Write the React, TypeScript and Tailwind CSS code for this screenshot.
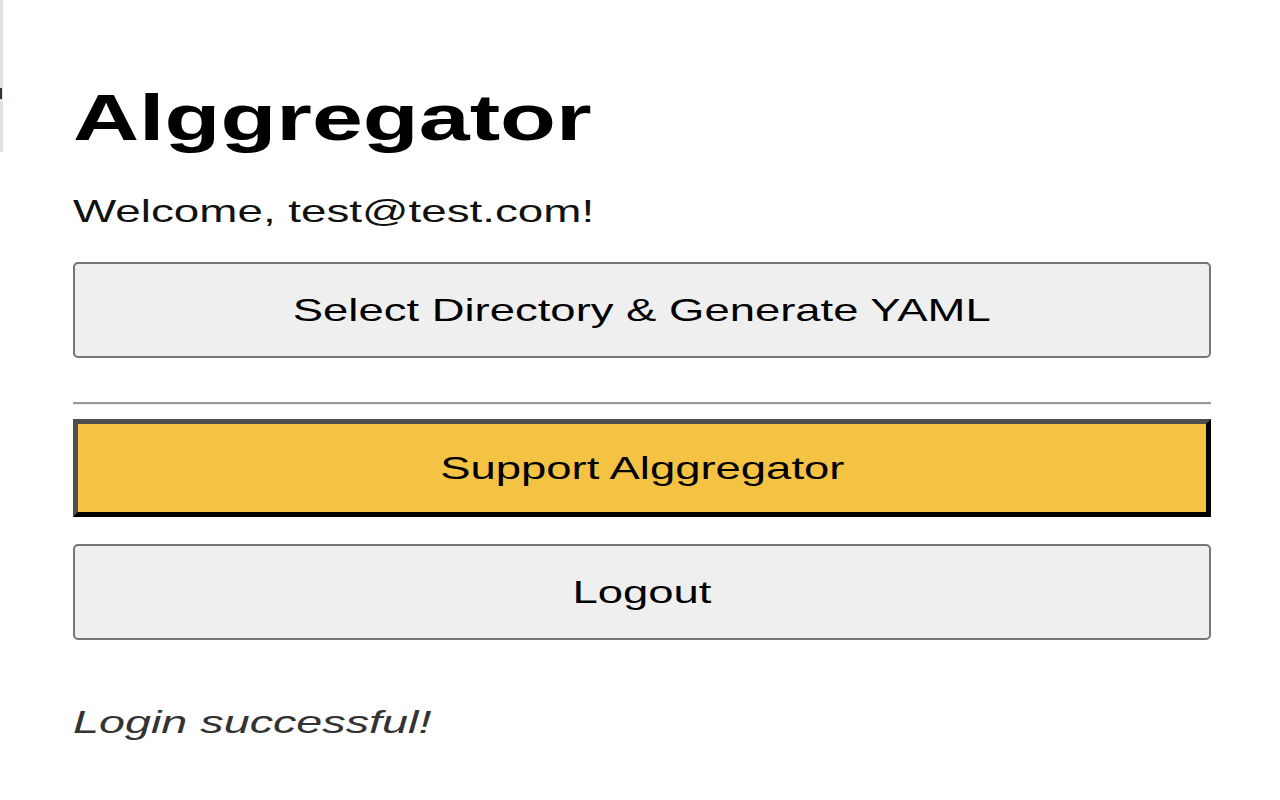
import React from "react";

function PopupButton({
  label,
  variant = "plain",
}: {
  label: string;
  variant?: "plain" | "support";
}) {
  const base =
    "w-full flex items-center justify-center text-[32px] leading-none text-black";
  const styles =
    variant === "support"
      ? "h-[98px] bg-[#f5c343] border-[5px] border-t-[#4e4e4e] border-l-[#4e4e4e] border-b-black border-r-black"
      : "h-[96px] bg-[#efefef] border-2 border-[#767676] rounded-[5px]";
  return (
    <button className={`${base} ${styles}`}>
      <span className="inline-block scale-x-[1.42] whitespace-nowrap">
        {label}
      </span>
    </button>
  );
}

function App() {
  const email = "test@test.com";
  return (
    <div
      className="relative w-[1280px] h-[800px] bg-white overflow-hidden"
      style={{ fontFamily: '"Liberation Sans", Arial, sans-serif' }}
    >
      {/* leftover window edge on the left */}
      <div className="absolute left-0 top-0 w-[3px] h-[152px] bg-[#dfe2e6]">
        <div className="mt-[88px] w-[2px] h-[11px] bg-[#333]" />
      </div>

      <div className="flex flex-col pl-[73px] pr-[69px]">
        <h1 className="mt-[86px] text-[64px] leading-none font-bold text-black">
          <span className="inline-block origin-left scale-x-[1.43]">
            Alggregator
          </span>
        </h1>

        <p className="mt-[45px] text-[32px] leading-none text-[#111]">
          <span className="inline-block origin-left scale-x-[1.43] whitespace-nowrap">
            Welcome, {email}!
          </span>
        </p>

        <div className="mt-[35px]">
          <PopupButton label="Select Directory & Generate YAML" />
        </div>

        <div className="mt-[44px] h-[3px] border-t-2 border-[#9b9b9b] bg-[#eeeeee]" />

        <div className="mt-[14px]">
          <PopupButton label="Support Alggregator" variant="support" />
        </div>

        <div className="mt-[27px]">
          <PopupButton label="Logout" />
        </div>

        <p className="mt-[66px] text-[32px] leading-none italic text-[#333]">
          <span className="inline-block origin-left scale-x-[1.46] whitespace-nowrap">
            Login successful!
          </span>
        </p>
      </div>
    </div>
  );
}

export default App;
